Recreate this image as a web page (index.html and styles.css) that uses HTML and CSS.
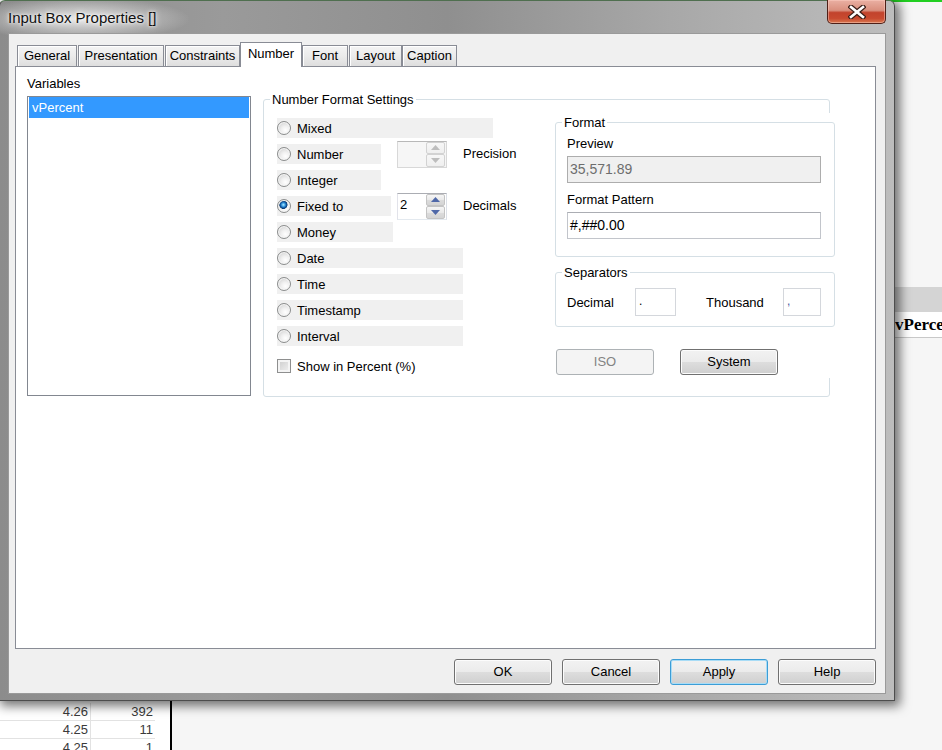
FILE: index.html
```html
<!DOCTYPE html>
<html>
<head>
<meta charset="utf-8">
<title>Input Box Properties</title>
<link rel="stylesheet" href="styles.css">
</head>
<body>
<div class="desktop">
  <div class="bg-left">
    <div class="trow"><span class="c1">4.26</span><span class="c2">392</span><span class="c3"></span></div>
    <div class="trow"><span class="c1">4.25</span><span class="c2">11</span><span class="c3"></span></div>
    <div class="trow"><span class="c1">4.25</span><span class="c2">1</span><span class="c3"><svg width="7" height="4" viewBox="0 0 7 4"><path d="M0 0H7L3.5 4Z" fill="#c4c4c4"/></svg></span></div>
  </div>
  <div class="bg-right">
    <div class="green"></div>
    <div class="hdr-band"></div>
    <div class="hdr-row"><span>vPercent</span></div>
  </div>

  <div class="window">
    <div class="titlebar">
      <span class="title">Input Box Properties []</span>
      <div class="close">
        <svg width="18" height="14" viewBox="0 0 18 14"><path d="M3 2L15 12M15 2L3 12" stroke="#3a1d17" stroke-width="5" stroke-linecap="square" fill="none"/><path d="M3 2L15 12M15 2L3 12" stroke="#ffffff" stroke-width="2.6" stroke-linecap="square" fill="none"/></svg>
      </div>
    </div>
    <div class="client">
      <div class="tabs">
        <div class="tab w-general">General</div>
        <div class="tab w-pres">Presentation</div>
        <div class="tab w-cons">Constraints</div>
        <div class="tab sel w-num">Number</div>
        <div class="tab w-font">Font</div>
        <div class="tab w-layout">Layout</div>
        <div class="tab w-cap">Caption</div>
      </div>
      <div class="panel">
        <div class="vars">
          <div class="lbl">Variables</div>
          <div class="list"><div class="item">vPercent</div></div>
        </div>
        <div class="group nfs">
          <span class="legend">Number Format Settings</span>
          <div class="opts">
            <div class="row"><div class="opt w216"><span class="radio"></span>Mixed</div></div>
            <div class="row"><div class="opt w104"><span class="radio"></span>Number</div>
              <div class="spin dis ml16"><div class="spin-val"></div><div class="spin-btns"><div class="sb"><svg width="9" height="5" viewBox="0 0 9 5"><path d="M0 5L4.5 0L9 5Z" fill="#bdbdbd"/></svg></div><div class="sb"><svg width="9" height="5" viewBox="0 0 9 5"><path d="M0 0L4.5 5L9 0Z" fill="#bdbdbd"/></svg></div></div></div>
              <span class="slbl">Precision</span>
            </div>
            <div class="row"><div class="opt w104"><span class="radio"></span>Integer</div></div>
            <div class="row"><div class="opt w114"><span class="radio on"></span>Fixed to</div>
              <div class="spin ml6"><div class="spin-val">2</div><div class="spin-btns"><div class="sb"><svg width="9" height="5" viewBox="0 0 9 5"><path d="M0 5L4.5 0L9 5Z" fill="#4f68a8"/></svg></div><div class="sb"><svg width="9" height="5" viewBox="0 0 9 5"><path d="M0 0L4.5 5L9 0Z" fill="#4f68a8"/></svg></div></div></div>
              <span class="slbl">Decimals</span>
            </div>
            <div class="row"><div class="opt w116"><span class="radio"></span>Money</div></div>
            <div class="row"><div class="opt w186"><span class="radio"></span>Date</div></div>
            <div class="row"><div class="opt w186"><span class="radio"></span>Time</div></div>
            <div class="row"><div class="opt w186"><span class="radio"></span>Timestamp</div></div>
            <div class="row"><div class="opt w186"><span class="radio"></span>Interval</div></div>
            <div class="row chkrow"><span class="check"></span>Show in Percent (%)</div>
          </div>
          <div class="rcol">
            <div class="group fmt">
              <span class="legend">Format</span>
              <div class="flbl">Preview</div>
              <div class="inp ro">35,571.89</div>
              <div class="flbl mt9">Format Pattern</div>
              <div class="inp">#,##0.00</div>
            </div>
            <div class="group sep">
              <span class="legend">Separators</span>
              <span class="slbl-dec">Decimal</span>
              <div class="inp small w41">.</div>
              <span class="slbl-th">Thousand</span>
              <div class="inp small w38">,</div>
            </div>
            <div class="btnrow">
              <div class="btn disabled iso">ISO</div>
              <div class="btn sys">System</div>
            </div>
          </div>
        </div>
      </div>
      <div class="actions">
        <div class="btn">OK</div>
        <div class="btn">Cancel</div>
        <div class="btn focus">Apply</div>
        <div class="btn">Help</div>
      </div>
    </div>
  </div>
</div>
</body>
</html>
```
FILE: styles.css
```css
* { box-sizing: border-box; }
html, body { margin: 0; padding: 0; }
body {
  font-family: "Liberation Sans", Arial, sans-serif;
  font-size: 13px;
  color: #000;
  background: #f7f7f7;
}
.desktop {
  position: relative;
  width: 942px;
  height: 750px;
  overflow: hidden;
  display: flex;
}

/* background application */
.bg-left {
  width: 172px;
  flex-shrink: 0;
  background: #fff;
  border-right: 2px solid #000;
  padding-top: 703px;
  color: #3a3a3a;
}
.trow { display: flex; height: 18px; }
.trow .c1, .trow .c2 {
  border-bottom: 1px solid #e2e2e2;
  text-align: right;
  padding-right: 2px;
  line-height: 17px;
}
.trow .c1 { width: 91px; border-right: 1px solid #e2e2e2; }
.trow .c2 { width: 64px; }
.trow .c3 { width: 15px; display: flex; align-items: flex-end; justify-content: center; padding-bottom: 2px; }
.bg-right { flex: 1; background: #f6f6f6; }
.green { height: 2px; background: #22cf22; }
.hdr-band { height: 25px; margin-top: 285px; background: #d4d4d4; }
.hdr-row {
  height: 26px;
  background: #fff;
  border-bottom: 1px solid #c8c8c8;
  padding-left: 723px;
  font-family: "Liberation Serif", "Times New Roman", serif;
  font-weight: bold;
  font-size: 17px;
  line-height: 26px;
  white-space: nowrap;
}

/* window */
.window {
  position: absolute;
  left: -1px;
  top: 0;
  width: 896px;
  height: 701px;
  border: 1px solid #4d4d4d;
  border-top-color: #4f6f4f;
  border-radius: 6px 6px 0 0;
  padding-bottom: 6px;
  background:
    radial-gradient(ellipse 110px 22px at 80px 18px, rgba(235,235,235,0.95), rgba(235,235,235,0) 100%),
    linear-gradient(90deg, #8c8c8c 0%, #9a9a9a 25%, #8f8f8f 50%, #a8a8a8 75%, #bdbdbd 100%);
  box-shadow: 3px 3px 11px 2px rgba(0,0,0,0.55);
}
.titlebar {
  height: 32px;
  display: flex;
  justify-content: space-between;
  align-items: flex-start;
  padding-left: 8px;
}
.title {
  font-size: 15px;
  line-height: 17px;
  padding-top: 8px;
  color: #111;
  text-shadow: 0 0 6px #fff, 0 0 3px #fff;
}
.close {
  width: 59px;
  height: 24px;
  margin-top: -1px;
  margin-right: 8px;
  border: 1px solid #4e1f17;
  border-top: none;
  border-radius: 0 0 5px 5px;
  background: linear-gradient(#eab0a3 0%, #d98f7e 45%, #c2432c 55%, #c84a30 80%, #d9784f 100%);
  box-shadow: inset 0 0 0 1px rgba(255,210,200,0.45);
  display: flex;
  align-items: center;
  justify-content: center;
}

.client {
  margin: 0 8px 0 8px;
  height: 661px;
  background: #f0f0f0;
  border: 1px solid #9a9a9a;
  padding: 8px 9px 0 6px;
}

/* tabs */
.tabs {
  display: flex;
  align-items: flex-start;
  height: 25px;
  margin-bottom: -1px;
  padding-left: 2px;
}
.tab {
  height: 21px;
  margin-top: 3px;
  margin-right: 1px;
  border: 1px solid #898c95;
  border-bottom: none;
  background: linear-gradient(#f4f4f4, #ebebeb 50%, #dedede 100%);
  box-shadow: inset 1px 1px 0 #fff;
  line-height: 20px;
  text-align: center;
  white-space: nowrap;
}
.tab.sel {
  height: 25px;
  margin-top: 0;
  margin-right: 0;
  background: #fff;
  box-shadow: none;
  line-height: 22px;
  position: relative;
  z-index: 1;
}
.w-general { width: 60px; }
.w-pres { width: 86px; }
.w-cons { width: 75px; margin-right: 0; }
.w-num { width: 62px; }
.w-font { width: 46px; }
.w-layout { width: 53px; margin-right: 0; }
.w-cap { width: 55px; }

.panel {
  height: 583px;
  border: 1px solid #898c95;
  background: #fff;
  display: flex;
  align-items: flex-start;
  padding: 9px 0 0 11px;
}
.vars { width: 224px; flex-shrink: 0; }
.lbl { line-height: 16px; }
.list {
  margin-top: 4px;
  height: 300px;
  border: 1px solid #828790;
  padding: 0 1px;
}
.item {
  height: 21px;
  line-height: 21px;
  background: #3399ff;
  color: #fff;
  padding-left: 3px;
}

/* groups */
.group {
  position: relative;
  border: 1px solid #d5dfe5;
  border-radius: 3px;
}
.legend {
  position: absolute;
  top: -8px;
  left: 6px;
  padding: 0 2px;
  line-height: 15px;
  background: #fff;
  white-space: nowrap;
}
.nfs {
  width: 567px;
  height: 298px;
  flex-shrink: 0;
  margin-left: 12px;
  margin-top: 23px;
  display: flex;
  align-items: flex-start;
  padding: 18px 0 0 13px;
}
.opts {
  width: 278px;
  flex-shrink: 0;
  display: flex;
  flex-direction: column;
  gap: 6px;
}
.row {
  height: 20px;
  display: flex;
  align-items: center;
}
.opt {
  height: 20px;
  display: flex;
  align-items: center;
  background: #f0f0f0;
  white-space: nowrap;
}
.w216 { width: 216px; }
.w104 { width: 104px; }
.w114 { width: 114px; }
.w116 { width: 116px; }
.w186 { width: 186px; }
.radio {
  width: 14px;
  height: 14px;
  border-radius: 50%;
  border: 1px solid #8b8d8d;
  margin-right: 6px;
  flex-shrink: 0;
  background: radial-gradient(circle at 62% 68%, #ffffff 0%, #f1f1f1 35%, #d8d8d8 75%, #cdcdcd 100%);
  box-shadow: inset 0 0 0 1px #f7f7f7;
}
.radio.on {
  background:
    radial-gradient(circle at 45% 40%, #b6ecff 0px, #48a8e8 1.5px, #1262b0 2.8px, #0a3a70 3.8px, rgba(10,58,112,0) 4.4px),
    radial-gradient(circle at 62% 68%, #ffffff 0%, #f1f1f1 35%, #d8d8d8 75%, #cdcdcd 100%);
}
.chkrow { margin-top: 4px; padding-left: 0; white-space: nowrap; }
.check {
  width: 14px;
  height: 14px;
  border: 1px solid #8e8f8f;
  margin-right: 6px;
  background: linear-gradient(135deg, #cbcbcb, #f2f2f2);
  box-shadow: inset 0 0 0 2px #f4f4f4;
}
.ml16 { margin-left: 16px; }
.ml6 { margin-left: 6px; }
.slbl { margin-left: 16px; margin-bottom: 2px; white-space: nowrap; }

.spin {
  width: 50px;
  height: 27px;
  flex-shrink: 0;
  display: flex;
  border: 1px solid;
  border-color: #abadb3 #dbdfe6 #e3e9ef #e2e3ea;
  background: #fff;
}
.spin.dis { background: #f6f6f6; border-color: #b8b8b8 #d8d8d8 #d8d8d8 #d8d8d8; }
.spin-val { flex: 1; padding: 3px 0 0 2px; line-height: 15px; }
.spin-btns {
  width: 20px;
  display: flex;
  flex-direction: column;
  padding: 0 1px 0 0;
}
.sb {
  height: 12.5px;
  border: 1px solid #c4c4c4;
  border-radius: 2px;
  background: linear-gradient(#f6f6f6, #e9e9e9 50%, #dcdcdc 51%, #d4d4d4);
  display: flex;
  align-items: center;
  justify-content: center;
}
.spin.dis .sb { background: linear-gradient(#f7f7f7, #efefef); border-color: #d2d2d2; }

.rcol {
  width: 280px;
  flex-shrink: 0;
  margin-top: -5px;
  padding: 9px 0 3px 0;
  background: #fff;
}
.fmt { padding: 13px 13px 17px 11px; }
.flbl { line-height: 16px; }
.mt9 { margin-top: 9px; }
.inp {
  margin-top: 4px;
  height: 27px;
  border: 1px solid #c2c5cb;
  border-top-color: #abadb3;
  background: #fff;
  padding: 0 0 0 2px;
  line-height: 24px;
  font-size: 14px;
}
.inp.ro { background: #f0f0f0; color: #6d6d6d; border-color: #adadad; }
.sep {
  margin-top: 15px;
  display: flex;
  align-items: center;
  padding: 15px 13px 10px 11px;
}
.slbl-dec { width: 68px; }
.slbl-th { width: 77px; margin-left: 30px; }
.inp.small {
  margin-top: 0;
  height: 28px;
  border-color: #d4d7dc;
  padding-left: 3px;
  font-size: 12px;
  line-height: 24px;
}
.w41 { width: 41px; }
.w38 { width: 38px; color: #4a55a0; }

.btnrow { display: flex; margin-top: 22px; }
.btn {
  width: 98px;
  height: 26px;
  border: 1px solid #707070;
  border-radius: 3px;
  background: linear-gradient(#f2f2f2 0%, #ebebeb 50%, #dddddd 51%, #cfcfcf 100%);
  box-shadow: inset 0 0 0 1px #fcfcfc;
  text-align: center;
  line-height: 24px;
  white-space: nowrap;
}
.btn.disabled {
  border-color: #adb2b5;
  background: #f4f4f4;
  color: #838383;
  box-shadow: none;
}
.iso { margin-left: 1px; }
.sys { margin-left: 26px; }
.btn.focus {
  border-color: #3c9dd6;
  box-shadow: inset 0 0 0 1px #a8dcf6;
}
.actions {
  display: flex;
  justify-content: flex-end;
  gap: 10px;
  margin-top: 10px;
}
```
